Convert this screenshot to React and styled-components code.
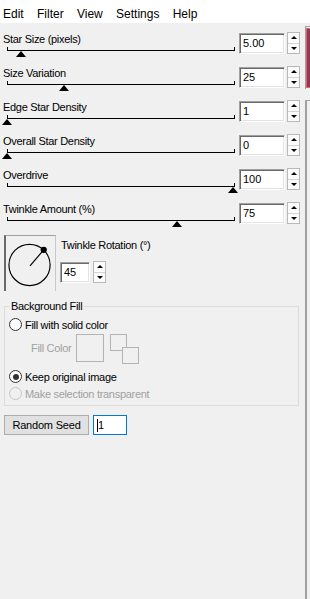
import React from "react";
import styled, { createGlobalStyle } from "styled-components";

const GlobalStyle = createGlobalStyle`
  html, body {
    margin: 0;
    padding: 0;
    background: #f0f0f0;
  }
  body {
    font-family: "Liberation Sans", Arial, sans-serif;
    font-size: 11px;
    color: #000;
  }
`;

const sliders = [
  { label: "Star Size (pixels)", value: "5.00", pos: 6.2 },
  { label: "Size Variation", value: "25", pos: 25 },
  { label: "Edge Star Density", value: "1", pos: 0 },
  { label: "Overall Star Density", value: "0", pos: 0 },
  { label: "Overdrive", value: "100", pos: 100 },
  { label: "Twinkle Amount (%)", value: "75", pos: 75 },
];

const Spin = () => (
  <Spinner>
    <SpinHalf>
      <Arrow $up />
    </SpinHalf>
    <SpinHalf $lower>
      <Arrow />
    </SpinHalf>
  </Spinner>
);

const App = () => (
  <Window>
    <GlobalStyle />
    <MenuBar>
      <MenuItem>Edit</MenuItem>
      <MenuItem>Filter</MenuItem>
      <MenuItem>View</MenuItem>
      <MenuItem>Settings</MenuItem>
      <MenuItem>Help</MenuItem>
    </MenuBar>
    <Body>
      <Panel>
        {sliders.map((s) => (
          <SliderRow key={s.label}>
            <SliderCell>
              <Label>{s.label}</Label>
              <Track>
                <Thumb style={{ left: `${s.pos}%` }} />
              </Track>
            </SliderCell>
            <NumBox $w={46}>{s.value}</NumBox>
            <Spin />
          </SliderRow>
        ))}

        <RotationRow>
          <Dial>
            <svg width="50" height="54" viewBox="0 0 50 54">
              <circle cx="24" cy="29" r="21" fill="none" stroke="#000" strokeWidth="1.2" />
              <line x1="24.5" y1="30" x2="38.5" y2="13.5" stroke="#000" strokeWidth="1.2" />
              <circle cx="38.5" cy="13.5" r="3.2" fill="#000" />
            </svg>
          </Dial>
          <RotationControls>
            <Label>Twinkle Rotation (°)</Label>
            <InputLine>
              <NumBox $w={30}>45</NumBox>
              <Spin />
            </InputLine>
          </RotationControls>
        </RotationRow>

        <Group>
          <Legend>Background Fill</Legend>
          <RadioRow>
            <Radio />
            <span>Fill with solid color</span>
          </RadioRow>
          <FillRow>
            <DimText>Fill Color</DimText>
            <Swatch />
            <SwapIcon>
              <SwapSquare $x={0} $y={0} />
              <SwapSquare $x={12} $y={13} />
            </SwapIcon>
          </FillRow>
          <RadioRow $top={3}>
            <Radio $checked />
            <span>Keep original image</span>
          </RadioRow>
          <RadioRow $top={0} $disabled>
            <Radio $disabled />
            <span>Make selection transparent</span>
          </RadioRow>
        </Group>

        <SeedRow>
          <Button>Random Seed</Button>
          <SeedInput>
            <Caret />1
          </SeedInput>
        </SeedRow>
      </Panel>
      <Strip>
        <StripPreview>
          <StripRed />
        </StripPreview>
        <StripRest />
      </Strip>
    </Body>
  </Window>
);

export default App;

const Window = styled.div`
  display: flex;
  flex-direction: column;
  width: 310px;
  height: 599px;
  overflow: hidden;
`;

const MenuBar = styled.div`
  display: flex;
  gap: 13.3px;
  height: 23px;
  box-sizing: border-box;
  padding: 6px 0 0 3px;
  background: #fff;
  font-size: 12px;
  line-height: 17px;
`;

const MenuItem = styled.span`
  white-space: nowrap;
`;

const Body = styled.div`
  flex: 1;
  display: flex;
`;

const Panel = styled.div`
  width: 305px;
  padding: 3px 0 0 0;
  box-sizing: border-box;
`;

const SliderRow = styled.div`
  display: flex;
  height: 34px;
`;

const SliderCell = styled.div`
  width: 239px;
  display: flex;
  flex-direction: column;
`;

const Label = styled.div`
  margin-top: 6px;
  padding-left: 3px;
  line-height: 14px;
  letter-spacing: -0.3px;
  white-space: nowrap;
`;

const Track = styled.div`
  position: relative;
  margin: 1px 0 0 7px;
  width: 226px;
  height: 3px;
  border: 1px solid #000;
  border-top: none;
`;

const Thumb = styled.div`
  position: absolute;
  top: 4px;
  margin-left: -6px;
  width: 0;
  height: 0;
  border-left: 5.5px solid transparent;
  border-right: 5.5px solid transparent;
  border-bottom: 6px solid #000;
`;

const NumBox = styled.div`
  box-sizing: border-box;
  width: ${(p) => p.$w}px;
  height: 21px;
  margin-top: 7px;
  padding: 0 3px;
  background: #fff;
  border-top: 1px solid #a0a0a0;
  border-left: 1px solid #a0a0a0;
  border-bottom: 1px solid #fff;
  border-right: 1px solid #fff;
  box-shadow: inset 1px 1px 0 #696969, inset -1px -1px 0 #e3e3e3;
  line-height: 19px;
`;

const Spinner = styled.div`
  box-sizing: border-box;
  display: flex;
  flex-direction: column;
  width: 13px;
  height: 22px;
  margin: 6px 0 0 2px;
  border: 1px solid #b9b9b9;
  background: #fbfbfb;
`;

const SpinHalf = styled.div`
  flex: 1;
  display: flex;
  align-items: center;
  justify-content: center;
  border-top: ${(p) => (p.$lower ? "1px solid #d4d4d4" : "none")};
`;

const Arrow = styled.div`
  width: 0;
  height: 0;
  border-left: 3px solid transparent;
  border-right: 3px solid transparent;
  ${(p) =>
    p.$up ? "border-bottom: 3px solid #000;" : "border-top: 3px solid #000;"}
`;

const RotationRow = styled.div`
  display: flex;
  margin-top: 5px;
  padding-left: 4px;
`;

const Dial = styled.div`
  box-sizing: border-box;
  width: 52px;
  height: 56px;
  border-top: 1px solid #a0a0a0;
  border-left: 2px solid #6a6a6a;
  border-right: 1px solid #c8c8c8;
  display: flex;
`;

const RotationControls = styled.div`
  margin-left: 4px;
  display: flex;
  flex-direction: column;

  ${Label} {
    margin-top: 3px;
    padding-left: 1px;
  }
`;

const InputLine = styled.div`
  display: flex;
  margin-top: 3px;

  ${Spinner} {
    margin-left: 3px;
  }
`;

const Group = styled.fieldset`
  margin: 9px 6px 0 4px;
  padding: 0 5px 3px 4px;
  border: 1px solid #dcdcdc;
  min-width: 0;
`;

const Legend = styled.legend`
  padding: 0 2px;
  margin-left: 0;
  line-height: 12px;
  letter-spacing: -0.3px;
`;

const RadioRow = styled.div`
  display: flex;
  align-items: center;
  gap: 3px;
  height: 17px;
  margin-top: ${(p) => (p.$top !== undefined ? p.$top : 4)}px;
  letter-spacing: -0.3px;
  color: ${(p) => (p.$disabled ? "#a0a0a0" : "#000")};
  white-space: nowrap;
`;

const Radio = styled.span`
  position: relative;
  box-sizing: border-box;
  width: 13px;
  height: 13px;
  border-radius: 50%;
  border: 1px solid ${(p) => (p.$disabled ? "#c6c6c6" : "#333")};
  background: ${(p) => (p.$disabled ? "#f0f0f0" : "#fff")};
  flex-shrink: 0;

  &::after {
    content: "";
    display: ${(p) => (p.$checked ? "block" : "none")};
    position: absolute;
    left: 2.5px;
    top: 2.5px;
    width: 6px;
    height: 6px;
    border-radius: 50%;
    background: #333;
  }
`;

const FillRow = styled.div`
  display: flex;
  align-items: flex-start;
  height: 31px;
  margin-top: 1px;
`;

const DimText = styled.span`
  margin: 7px 0 0 22px;
  width: 45px;
  line-height: 14px;
  color: #a0a0a0;
  letter-spacing: -0.3px;
  white-space: nowrap;
`;

const Swatch = styled.div`
  width: 28px;
  height: 28px;
  box-sizing: border-box;
  border: 1px solid #b4b4b4;
`;

const SwapIcon = styled.div`
  position: relative;
  width: 30px;
  height: 31px;
  margin-left: 6px;
`;

const SwapSquare = styled.div`
  position: absolute;
  left: ${(p) => p.$x}px;
  top: ${(p) => p.$y}px;
  width: 17px;
  height: 17px;
  box-sizing: border-box;
  border: 1px solid #b4b4b4;
  background: #f0f0f0;
`;

const SeedRow = styled.div`
  display: flex;
  gap: 4px;
  margin: 9px 0 0 4px;
`;

const Button = styled.div`
  box-sizing: border-box;
  width: 85px;
  height: 20px;
  display: flex;
  align-items: center;
  justify-content: center;
  background: #e1e1e1;
  border: 1px solid #adadad;
  letter-spacing: -0.2px;
`;

const SeedInput = styled.div`
  box-sizing: border-box;
  width: 34px;
  height: 20px;
  display: flex;
  align-items: center;
  padding-left: 3px;
  background: #fff;
  border: 1px solid #0078d7;
`;

const Caret = styled.span`
  width: 1px;
  height: 13px;
  background: #000;
`;

const Strip = styled.div`
  width: 5px;
  display: flex;
  flex-direction: column;
  padding-top: 3px;
`;

const StripPreview = styled.div`
  height: 63px;
  box-sizing: border-box;
  border-top: 1px solid #a0a0a0;
  border-left: 1px solid #a0a0a0;
  padding-top: 1px;
`;

const StripRed = styled.div`
  height: 60px;
  box-sizing: border-box;
  border-left: 1px solid #d86a6a;
  border-top: 1px solid #d86a6a;
  border-bottom: 1px solid #d86a6a;
  background: #8c3c58;
`;

const StripRest = styled.div`
  flex: 1;
  margin-top: 11px;
  border-top: 1px solid #a0a0a0;
  border-left: 2px solid #a0a0a0;
`;
